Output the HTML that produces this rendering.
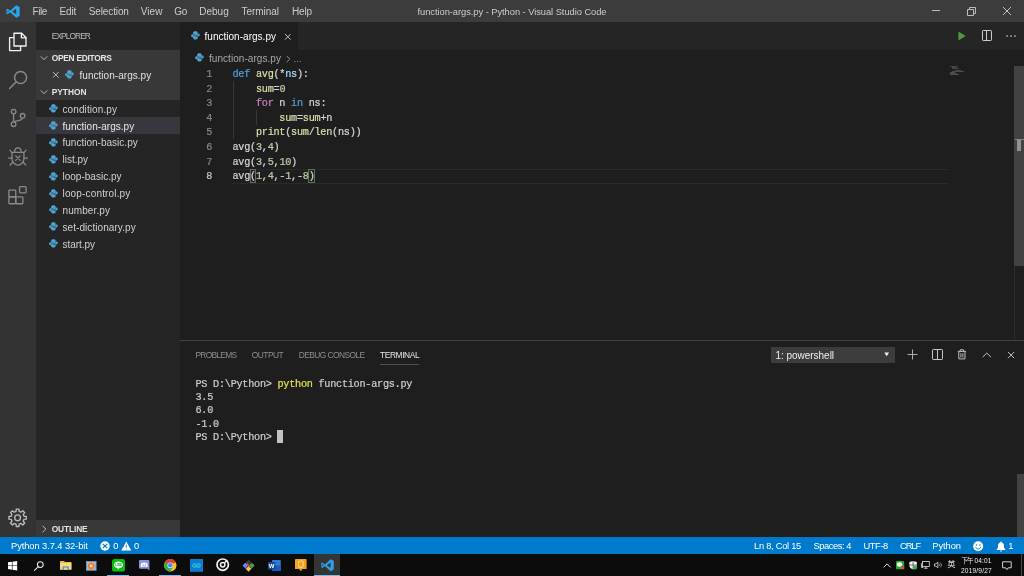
<!DOCTYPE html>
<html lang="en">
<head>
<meta charset="utf-8">
<title>function-args.py - Python - Visual Studio Code</title>
<style>
html,body{margin:0;padding:0;background:#1e1e1e;}
body{width:1024px;height:576px;position:relative;overflow:hidden;font-family:'Liberation Sans', 'Noto Sans CJK TC', sans-serif;}
#app{position:absolute;left:0;top:0;width:1024px;height:576px;overflow:hidden;will-change:transform;}
.t{position:absolute;white-space:pre;font-family:'Liberation Sans', 'Noto Sans CJK TC', sans-serif;}
.mono{position:absolute;white-space:pre;font-family:'Liberation Mono', monospace;font-size:10.2px;line-height:14.58px;height:14.58px;letter-spacing:-0.258px;color:#d4d4d4;-webkit-text-stroke-width:0.22px;}
</style>
</head>
<body>
<div id="app">
<!-- base regions -->
<div style="position:absolute;left:0px;top:0px;width:1024px;height:22px;background:#3c3c3c;"></div>
<div style="position:absolute;left:0px;top:22px;width:36px;height:515px;background:#333333;"></div>
<div style="position:absolute;left:36px;top:22px;width:144px;height:515px;background:#252526;"></div>
<div style="position:absolute;left:180px;top:22px;width:844px;height:28px;background:#252526;"></div>
<div style="position:absolute;left:180px;top:22px;width:117.5px;height:28px;background:#1e1e1e;"></div>
<div style="position:absolute;left:180px;top:340px;width:844px;height:1px;background:#414141;"></div>
<div style="position:absolute;left:0px;top:537px;width:1024px;height:17px;background:#007acc;"></div>
<div style="position:absolute;left:0px;top:554px;width:1024px;height:22px;background:#0c0c0c;"></div>
<!-- title bar -->
<svg style="position:absolute;left:6px;top:5px;overflow:visible;" width="14" height="13" viewBox="0 0 14 13"><path d="M10.2 0.3 L13.6 1.9 V11.1 L10.2 12.7 L4.2 7.3 L1.6 9.3 L0.4 8.7 V4.3 L1.6 3.7 L4.2 5.7 Z M10.2 3.6 L6.3 6.5 L10.2 9.4 Z M1.5 5.2 V7.8 L2.9 6.5 Z" fill="#2aa7f0" fill-rule="evenodd"/></svg>
<div class="t" style="left:32.5px;top:5.3px;line-height:14.0px;font-size:10px;color:#cccccc;letter-spacing:-0.406px;">File</div>
<div class="t" style="left:59.5px;top:5.3px;line-height:14.0px;font-size:10px;color:#cccccc;letter-spacing:-0.121px;">Edit</div>
<div class="t" style="left:88.75px;top:5.3px;line-height:14.0px;font-size:10px;color:#cccccc;letter-spacing:-0.127px;">Selection</div>
<div class="t" style="left:140.75px;top:5.3px;line-height:14.0px;font-size:10px;color:#cccccc;letter-spacing:0.062px;">View</div>
<div class="t" style="left:174.25px;top:5.3px;line-height:14.0px;font-size:10px;color:#cccccc;letter-spacing:-0.297px;">Go</div>
<div class="t" style="left:199.25px;top:5.3px;line-height:14.0px;font-size:10px;color:#cccccc;letter-spacing:0.006px;">Debug</div>
<div class="t" style="left:241.5px;top:5.3px;line-height:14.0px;font-size:10px;color:#cccccc;letter-spacing:-0.037px;">Terminal</div>
<div class="t" style="left:292px;top:5.3px;line-height:14.0px;font-size:10px;color:#cccccc;letter-spacing:-0.145px;">Help</div>
<div class="t" style="left:417.5px;top:5.8px;line-height:13.0px;font-size:9.3px;color:#cccccc;letter-spacing:-0.033px;">function-args.py - Python - Visual Studio Code</div>
<svg style="position:absolute;left:931px;top:5px;overflow:visible;" width="10" height="12" viewBox="0 0 10 12"><path d="M1 5.5 H9" stroke="#bcbcbc" stroke-width="1" fill="none"/></svg>
<svg style="position:absolute;left:966px;top:5px;overflow:visible;" width="11" height="12" viewBox="0 0 11 12"><path d="M1.5 4.5 H7.5 V10.5 H1.5 Z M3.5 4.5 V2.5 H9.5 V8.5 H7.5" stroke="#bcbcbc" stroke-width="1" fill="none"/></svg>
<svg style="position:absolute;left:1002px;top:6px;overflow:visible;" width="10" height="10" viewBox="0 0 10 10"><path d="M1 1 L9 9 M9 1 L1 9" stroke="#c4c4c4" stroke-width="1" fill="none"/></svg>
<!-- activity bar icons -->
<svg style="position:absolute;left:0px;top:22px;overflow:visible;" width="36" height="40" viewBox="0 0 36 40"><g fill="none" stroke="#f2f2f2" stroke-width="1.35" stroke-linejoin="round" stroke-linecap="round"><path d="M14 24 V11.2 H21.6 L26 15.6 V24 Z"/><path d="M21.4 11.4 V15.8 H25.8"/><path d="M13.8 15.6 H9.6 V28.6 H20.6 V24.2"/></g></svg>
<svg style="position:absolute;left:0px;top:62px;overflow:visible;" width="36" height="36" viewBox="0 0 36 36"><g fill="none" stroke="#8a8a8a" stroke-width="1.45" stroke-linecap="round"><circle cx="20.6" cy="15.4" r="6"/><path d="M16.2 19.8 L9.6 26.6"/></g></svg>
<svg style="position:absolute;left:0px;top:100px;overflow:visible;" width="36" height="36" viewBox="0 0 36 36"><g fill="none" stroke="#8a8a8a" stroke-width="1.3"><circle cx="13.6" cy="11.6" r="2.3"/><circle cx="22.6" cy="15.8" r="2.3"/><circle cx="13.6" cy="24.2" r="2.3"/><path d="M13.6 14 V21.8 M22.4 18.2 C22 21 17 20.6 13.8 21.8"/></g></svg>
<svg style="position:absolute;left:0px;top:140px;overflow:visible;" width="36" height="36" viewBox="0 0 36 36"><g fill="none" stroke="#8a8a8a" stroke-width="1.25" stroke-linecap="round" stroke-linejoin="round"><path d="M12 12.3 H23.9 V19 C23.9 22.5 20.5 25 17.95 25 C15.4 25 12 22.5 12 19 Z"/><path d="M14.6 11.9 C14.6 6.4 21.2 6.4 21.2 11.9"/><path d="M12 12.6 L9.8 10.2 M23.9 12.6 L26.1 10.2 M12 18.1 H8.4 M23.9 18.1 H27.4 M12.7 22.2 L10.1 25 M23.2 22.2 L25.8 25"/><path d="M15.7 15.9 L20.2 20.4 M20.2 15.9 L15.7 20.4"/></g></svg>
<svg style="position:absolute;left:0px;top:178px;overflow:visible;" width="36" height="36" viewBox="0 0 36 36"><g fill="none" stroke="#8a8a8a" stroke-width="1.3" stroke-linejoin="round"><rect x="8.9" y="12.05" width="6.85" height="6.85" rx="0.8"/><rect x="8.9" y="18.9" width="6.85" height="6.85" rx="0.8"/><rect x="15.75" y="18.9" width="7.1" height="6.85" rx="0.8"/><rect x="19.55" y="8.65" width="6.55" height="6.2" rx="1"/></g></svg>
<svg style="position:absolute;left:0px;top:500px;overflow:visible;" width="36" height="36" viewBox="0 0 36 36"><g fill="none" stroke="#bcbcbc" stroke-width="1.35" stroke-linejoin="round"><path d="M26.29 16.42 L26.29 19.18 L24.02 19.34 L23.23 21.25 L24.72 22.97 L22.77 24.92 L21.05 23.43 L19.14 24.22 L18.98 26.49 L16.22 26.49 L16.06 24.22 L14.15 23.43 L12.43 24.92 L10.48 22.97 L11.97 21.25 L11.18 19.34 L8.91 19.18 L8.91 16.42 L11.18 16.26 L11.97 14.35 L10.48 12.63 L12.43 10.68 L14.15 12.17 L16.06 11.38 L16.22 9.11 L18.98 9.11 L19.14 11.38 L21.05 12.17 L22.77 10.68 L24.72 12.63 L23.23 14.35 L24.02 16.26 Z"/><circle cx="17.6" cy="17.8" r="2.9"/></g></svg>
<!-- side bar -->
<div class="t" style="left:51.75px;top:31.1px;line-height:11.8px;font-size:8.4px;color:#bbbbbb;letter-spacing:-0.922px;">EXPLORER</div>
<div style="position:absolute;left:36px;top:50px;width:144px;height:50px;background:#383839;"></div>
<svg style="position:absolute;left:40px;top:54.2px;overflow:visible;" width="8" height="8" viewBox="0 0 8 8"><path d="M0.8 2.4 L4 5.6 L7.2 2.4" fill="none" stroke="#c8c8c8" stroke-width="0.9"/></svg>
<div class="t" style="left:51.75px;top:53.3px;line-height:11.8px;font-size:8.4px;color:#e4e4e4;font-weight:700;letter-spacing:-0.283px;">OPEN EDITORS</div>
<svg style="position:absolute;left:52.2px;top:71.4px;overflow:visible;" width="7.6" height="7.6" viewBox="0 0 7.6 7.6"><path d="M1 1 L6.6 6.6 M6.6 1 L1 6.6" fill="none" stroke="#c8c8c8" stroke-width="0.9"/></svg>
<svg style="position:absolute;left:65.2px;top:69.7px;overflow:visible;" width="8.8" height="8.8" viewBox="0 0 10 10"><g fill="#4fa3d1"><path d="M5 0.3 C3.2 0.3 2.4 1 2.4 2 V3.3 H5 V3.8 H1.4 C0.5 3.8 0.1 4.8 0.1 5.5 C0.1 6.4 0.6 7.2 1.4 7.2 H2.4 V6 C2.4 5.2 3 4.8 3.8 4.8 H6.3 C7.1 4.8 7.6 4.2 7.6 3.4 V2 C7.6 1 6.8 0.3 5 0.3 Z"/><path d="M5 0.3 C3.2 0.3 2.4 1 2.4 2 V3.3 H5 V3.8 H1.4 C0.5 3.8 0.1 4.8 0.1 5.5 C0.1 6.4 0.6 7.2 1.4 7.2 H2.4 V6 C2.4 5.2 3 4.8 3.8 4.8 H6.3 C7.1 4.8 7.6 4.2 7.6 3.4 V2 C7.6 1 6.8 0.3 5 0.3 Z" transform="rotate(180 5 5)"/></g></svg>
<div class="t" style="left:79.5px;top:68.8px;line-height:14.0px;font-size:10px;color:#e0e0e0;letter-spacing:0.037px;">function-args.py</div>
<svg style="position:absolute;left:40px;top:88px;overflow:visible;" width="8" height="8" viewBox="0 0 8 8"><path d="M0.8 2.4 L4 5.6 L7.2 2.4" fill="none" stroke="#c8c8c8" stroke-width="0.9"/></svg>
<div class="t" style="left:51.75px;top:87.1px;line-height:11.8px;font-size:8.4px;color:#e4e4e4;font-weight:700;letter-spacing:-0.026px;">PYTHON</div>
<div style="position:absolute;left:36px;top:117.08px;width:144px;height:16.88px;background:#37373d;"></div>
<svg style="position:absolute;left:48.7px;top:104.19px;overflow:visible;" width="8.8" height="8.8" viewBox="0 0 10 10"><g fill="#4fa3d1"><path d="M5 0.3 C3.2 0.3 2.4 1 2.4 2 V3.3 H5 V3.8 H1.4 C0.5 3.8 0.1 4.8 0.1 5.5 C0.1 6.4 0.6 7.2 1.4 7.2 H2.4 V6 C2.4 5.2 3 4.8 3.8 4.8 H6.3 C7.1 4.8 7.6 4.2 7.6 3.4 V2 C7.6 1 6.8 0.3 5 0.3 Z"/><path d="M5 0.3 C3.2 0.3 2.4 1 2.4 2 V3.3 H5 V3.8 H1.4 C0.5 3.8 0.1 4.8 0.1 5.5 C0.1 6.4 0.6 7.2 1.4 7.2 H2.4 V6 C2.4 5.2 3 4.8 3.8 4.8 H6.3 C7.1 4.8 7.6 4.2 7.6 3.4 V2 C7.6 1 6.8 0.3 5 0.3 Z" transform="rotate(180 5 5)"/></g></svg>
<div class="t" style="left:62.5px;top:102.64px;line-height:14.0px;font-size:10px;color:#d0d0d0;letter-spacing:0.094px;">condition.py</div>
<svg style="position:absolute;left:48.7px;top:121.07px;overflow:visible;" width="8.8" height="8.8" viewBox="0 0 10 10"><g fill="#4fa3d1"><path d="M5 0.3 C3.2 0.3 2.4 1 2.4 2 V3.3 H5 V3.8 H1.4 C0.5 3.8 0.1 4.8 0.1 5.5 C0.1 6.4 0.6 7.2 1.4 7.2 H2.4 V6 C2.4 5.2 3 4.8 3.8 4.8 H6.3 C7.1 4.8 7.6 4.2 7.6 3.4 V2 C7.6 1 6.8 0.3 5 0.3 Z"/><path d="M5 0.3 C3.2 0.3 2.4 1 2.4 2 V3.3 H5 V3.8 H1.4 C0.5 3.8 0.1 4.8 0.1 5.5 C0.1 6.4 0.6 7.2 1.4 7.2 H2.4 V6 C2.4 5.2 3 4.8 3.8 4.8 H6.3 C7.1 4.8 7.6 4.2 7.6 3.4 V2 C7.6 1 6.8 0.3 5 0.3 Z" transform="rotate(180 5 5)"/></g></svg>
<div class="t" style="left:62.5px;top:119.52px;line-height:14.0px;font-size:10px;color:#e8e8e8;letter-spacing:0.037px;">function-args.py</div>
<svg style="position:absolute;left:48.7px;top:137.95px;overflow:visible;" width="8.8" height="8.8" viewBox="0 0 10 10"><g fill="#4fa3d1"><path d="M5 0.3 C3.2 0.3 2.4 1 2.4 2 V3.3 H5 V3.8 H1.4 C0.5 3.8 0.1 4.8 0.1 5.5 C0.1 6.4 0.6 7.2 1.4 7.2 H2.4 V6 C2.4 5.2 3 4.8 3.8 4.8 H6.3 C7.1 4.8 7.6 4.2 7.6 3.4 V2 C7.6 1 6.8 0.3 5 0.3 Z"/><path d="M5 0.3 C3.2 0.3 2.4 1 2.4 2 V3.3 H5 V3.8 H1.4 C0.5 3.8 0.1 4.8 0.1 5.5 C0.1 6.4 0.6 7.2 1.4 7.2 H2.4 V6 C2.4 5.2 3 4.8 3.8 4.8 H6.3 C7.1 4.8 7.6 4.2 7.6 3.4 V2 C7.6 1 6.8 0.3 5 0.3 Z" transform="rotate(180 5 5)"/></g></svg>
<div class="t" style="left:62.5px;top:136.4px;line-height:14.0px;font-size:10px;color:#d0d0d0;letter-spacing:0.012px;">function-basic.py</div>
<svg style="position:absolute;left:48.7px;top:154.83px;overflow:visible;" width="8.8" height="8.8" viewBox="0 0 10 10"><g fill="#4fa3d1"><path d="M5 0.3 C3.2 0.3 2.4 1 2.4 2 V3.3 H5 V3.8 H1.4 C0.5 3.8 0.1 4.8 0.1 5.5 C0.1 6.4 0.6 7.2 1.4 7.2 H2.4 V6 C2.4 5.2 3 4.8 3.8 4.8 H6.3 C7.1 4.8 7.6 4.2 7.6 3.4 V2 C7.6 1 6.8 0.3 5 0.3 Z"/><path d="M5 0.3 C3.2 0.3 2.4 1 2.4 2 V3.3 H5 V3.8 H1.4 C0.5 3.8 0.1 4.8 0.1 5.5 C0.1 6.4 0.6 7.2 1.4 7.2 H2.4 V6 C2.4 5.2 3 4.8 3.8 4.8 H6.3 C7.1 4.8 7.6 4.2 7.6 3.4 V2 C7.6 1 6.8 0.3 5 0.3 Z" transform="rotate(180 5 5)"/></g></svg>
<div class="t" style="left:62.5px;top:153.28px;line-height:14.0px;font-size:10px;color:#d0d0d0;letter-spacing:-0.009px;">list.py</div>
<svg style="position:absolute;left:48.7px;top:171.71px;overflow:visible;" width="8.8" height="8.8" viewBox="0 0 10 10"><g fill="#4fa3d1"><path d="M5 0.3 C3.2 0.3 2.4 1 2.4 2 V3.3 H5 V3.8 H1.4 C0.5 3.8 0.1 4.8 0.1 5.5 C0.1 6.4 0.6 7.2 1.4 7.2 H2.4 V6 C2.4 5.2 3 4.8 3.8 4.8 H6.3 C7.1 4.8 7.6 4.2 7.6 3.4 V2 C7.6 1 6.8 0.3 5 0.3 Z"/><path d="M5 0.3 C3.2 0.3 2.4 1 2.4 2 V3.3 H5 V3.8 H1.4 C0.5 3.8 0.1 4.8 0.1 5.5 C0.1 6.4 0.6 7.2 1.4 7.2 H2.4 V6 C2.4 5.2 3 4.8 3.8 4.8 H6.3 C7.1 4.8 7.6 4.2 7.6 3.4 V2 C7.6 1 6.8 0.3 5 0.3 Z" transform="rotate(180 5 5)"/></g></svg>
<div class="t" style="left:62.5px;top:170.16px;line-height:14.0px;font-size:10px;color:#d0d0d0;letter-spacing:0.006px;">loop-basic.py</div>
<svg style="position:absolute;left:48.7px;top:188.59px;overflow:visible;" width="8.8" height="8.8" viewBox="0 0 10 10"><g fill="#4fa3d1"><path d="M5 0.3 C3.2 0.3 2.4 1 2.4 2 V3.3 H5 V3.8 H1.4 C0.5 3.8 0.1 4.8 0.1 5.5 C0.1 6.4 0.6 7.2 1.4 7.2 H2.4 V6 C2.4 5.2 3 4.8 3.8 4.8 H6.3 C7.1 4.8 7.6 4.2 7.6 3.4 V2 C7.6 1 6.8 0.3 5 0.3 Z"/><path d="M5 0.3 C3.2 0.3 2.4 1 2.4 2 V3.3 H5 V3.8 H1.4 C0.5 3.8 0.1 4.8 0.1 5.5 C0.1 6.4 0.6 7.2 1.4 7.2 H2.4 V6 C2.4 5.2 3 4.8 3.8 4.8 H6.3 C7.1 4.8 7.6 4.2 7.6 3.4 V2 C7.6 1 6.8 0.3 5 0.3 Z" transform="rotate(180 5 5)"/></g></svg>
<div class="t" style="left:62.5px;top:187.04px;line-height:14.0px;font-size:10px;color:#d0d0d0;letter-spacing:0.160px;">loop-control.py</div>
<svg style="position:absolute;left:48.7px;top:205.47px;overflow:visible;" width="8.8" height="8.8" viewBox="0 0 10 10"><g fill="#4fa3d1"><path d="M5 0.3 C3.2 0.3 2.4 1 2.4 2 V3.3 H5 V3.8 H1.4 C0.5 3.8 0.1 4.8 0.1 5.5 C0.1 6.4 0.6 7.2 1.4 7.2 H2.4 V6 C2.4 5.2 3 4.8 3.8 4.8 H6.3 C7.1 4.8 7.6 4.2 7.6 3.4 V2 C7.6 1 6.8 0.3 5 0.3 Z"/><path d="M5 0.3 C3.2 0.3 2.4 1 2.4 2 V3.3 H5 V3.8 H1.4 C0.5 3.8 0.1 4.8 0.1 5.5 C0.1 6.4 0.6 7.2 1.4 7.2 H2.4 V6 C2.4 5.2 3 4.8 3.8 4.8 H6.3 C7.1 4.8 7.6 4.2 7.6 3.4 V2 C7.6 1 6.8 0.3 5 0.3 Z" transform="rotate(180 5 5)"/></g></svg>
<div class="t" style="left:62.5px;top:203.92px;line-height:14.0px;font-size:10px;color:#d0d0d0;letter-spacing:0.089px;">number.py</div>
<svg style="position:absolute;left:48.7px;top:222.35px;overflow:visible;" width="8.8" height="8.8" viewBox="0 0 10 10"><g fill="#4fa3d1"><path d="M5 0.3 C3.2 0.3 2.4 1 2.4 2 V3.3 H5 V3.8 H1.4 C0.5 3.8 0.1 4.8 0.1 5.5 C0.1 6.4 0.6 7.2 1.4 7.2 H2.4 V6 C2.4 5.2 3 4.8 3.8 4.8 H6.3 C7.1 4.8 7.6 4.2 7.6 3.4 V2 C7.6 1 6.8 0.3 5 0.3 Z"/><path d="M5 0.3 C3.2 0.3 2.4 1 2.4 2 V3.3 H5 V3.8 H1.4 C0.5 3.8 0.1 4.8 0.1 5.5 C0.1 6.4 0.6 7.2 1.4 7.2 H2.4 V6 C2.4 5.2 3 4.8 3.8 4.8 H6.3 C7.1 4.8 7.6 4.2 7.6 3.4 V2 C7.6 1 6.8 0.3 5 0.3 Z" transform="rotate(180 5 5)"/></g></svg>
<div class="t" style="left:62.5px;top:220.8px;line-height:14.0px;font-size:10px;color:#d0d0d0;letter-spacing:0.069px;">set-dictionary.py</div>
<svg style="position:absolute;left:48.7px;top:239.23px;overflow:visible;" width="8.8" height="8.8" viewBox="0 0 10 10"><g fill="#4fa3d1"><path d="M5 0.3 C3.2 0.3 2.4 1 2.4 2 V3.3 H5 V3.8 H1.4 C0.5 3.8 0.1 4.8 0.1 5.5 C0.1 6.4 0.6 7.2 1.4 7.2 H2.4 V6 C2.4 5.2 3 4.8 3.8 4.8 H6.3 C7.1 4.8 7.6 4.2 7.6 3.4 V2 C7.6 1 6.8 0.3 5 0.3 Z"/><path d="M5 0.3 C3.2 0.3 2.4 1 2.4 2 V3.3 H5 V3.8 H1.4 C0.5 3.8 0.1 4.8 0.1 5.5 C0.1 6.4 0.6 7.2 1.4 7.2 H2.4 V6 C2.4 5.2 3 4.8 3.8 4.8 H6.3 C7.1 4.8 7.6 4.2 7.6 3.4 V2 C7.6 1 6.8 0.3 5 0.3 Z" transform="rotate(180 5 5)"/></g></svg>
<div class="t" style="left:62.5px;top:237.68px;line-height:14.0px;font-size:10px;color:#d0d0d0;letter-spacing:-0.037px;">start.py</div>
<div style="position:absolute;left:36px;top:520.3px;width:144px;height:16.7px;background:#383839;"></div>
<svg style="position:absolute;left:40px;top:524.7px;overflow:visible;" width="8" height="8" viewBox="0 0 8 8"><path d="M2.6 0.8 L5.8 4 L2.6 7.2" fill="none" stroke="#c8c8c8" stroke-width="0.9"/></svg>
<div class="t" style="left:51.75px;top:523.8px;line-height:11.8px;font-size:8.4px;color:#e4e4e4;font-weight:700;letter-spacing:-0.145px;">OUTLINE</div>
<!-- editor tab / breadcrumbs -->
<svg style="position:absolute;left:190.5px;top:31.0px;overflow:visible;" width="8.8" height="8.8" viewBox="0 0 10 10"><g fill="#4fa3d1"><path d="M5 0.3 C3.2 0.3 2.4 1 2.4 2 V3.3 H5 V3.8 H1.4 C0.5 3.8 0.1 4.8 0.1 5.5 C0.1 6.4 0.6 7.2 1.4 7.2 H2.4 V6 C2.4 5.2 3 4.8 3.8 4.8 H6.3 C7.1 4.8 7.6 4.2 7.6 3.4 V2 C7.6 1 6.8 0.3 5 0.3 Z"/><path d="M5 0.3 C3.2 0.3 2.4 1 2.4 2 V3.3 H5 V3.8 H1.4 C0.5 3.8 0.1 4.8 0.1 5.5 C0.1 6.4 0.6 7.2 1.4 7.2 H2.4 V6 C2.4 5.2 3 4.8 3.8 4.8 H6.3 C7.1 4.8 7.6 4.2 7.6 3.4 V2 C7.6 1 6.8 0.3 5 0.3 Z" transform="rotate(180 5 5)"/></g></svg>
<div class="t" style="left:204.5px;top:29.9px;line-height:14.0px;font-size:10px;color:#ffffff;letter-spacing:0.021px;">function-args.py</div>
<svg style="position:absolute;left:283.7px;top:32.7px;overflow:visible;" width="7.6" height="7.6" viewBox="0 0 7.6 7.6"><path d="M1 1 L6.6 6.6 M6.6 1 L1 6.6" fill="none" stroke="#d0d0d0" stroke-width="0.9"/></svg>
<svg style="position:absolute;left:957px;top:31px;overflow:visible;" width="10" height="10" viewBox="0 0 10 10"><path d="M1.4 0.6 L8.6 5 L1.4 9.4 Z" fill="#4e9a3c"/></svg>
<svg style="position:absolute;left:982px;top:30px;overflow:visible;" width="11" height="12" viewBox="0 0 11 12"><rect x="0.5" y="0.5" width="9" height="10" rx="0.7" fill="none" stroke="#cacaca" stroke-width="1"/><path d="M4.5 1 V10" stroke="#cacaca" stroke-width="1"/></svg>
<svg style="position:absolute;left:1005px;top:34px;overflow:visible;" width="12" height="4" viewBox="0 0 12 4"><circle cx="2" cy="2" r="0.85" fill="#c8c8c8"/><circle cx="6" cy="2" r="0.85" fill="#c8c8c8"/><circle cx="10" cy="2" r="0.85" fill="#c8c8c8"/></svg>
<svg style="position:absolute;left:195.0px;top:53.3px;overflow:visible;" width="8.8" height="8.8" viewBox="0 0 10 10"><g fill="#4fa3d1"><path d="M5 0.3 C3.2 0.3 2.4 1 2.4 2 V3.3 H5 V3.8 H1.4 C0.5 3.8 0.1 4.8 0.1 5.5 C0.1 6.4 0.6 7.2 1.4 7.2 H2.4 V6 C2.4 5.2 3 4.8 3.8 4.8 H6.3 C7.1 4.8 7.6 4.2 7.6 3.4 V2 C7.6 1 6.8 0.3 5 0.3 Z"/><path d="M5 0.3 C3.2 0.3 2.4 1 2.4 2 V3.3 H5 V3.8 H1.4 C0.5 3.8 0.1 4.8 0.1 5.5 C0.1 6.4 0.6 7.2 1.4 7.2 H2.4 V6 C2.4 5.2 3 4.8 3.8 4.8 H6.3 C7.1 4.8 7.6 4.2 7.6 3.4 V2 C7.6 1 6.8 0.3 5 0.3 Z" transform="rotate(180 5 5)"/></g></svg>
<div class="t" style="left:209px;top:51.6px;line-height:14.0px;font-size:10px;color:#a8a8a8;letter-spacing:0.053px;">function-args.py</div>
<svg style="position:absolute;left:283.5px;top:54.8px;overflow:visible;" width="8" height="8" viewBox="0 0 8 8"><path d="M2.6 0.8 L5.8 4 L2.6 7.2" fill="none" stroke="#9a9a9a" stroke-width="0.9"/></svg>
<svg style="position:absolute;left:293.5px;top:60px;overflow:visible;" width="8" height="3" viewBox="0 0 8 3"><circle cx="1" cy="1.5" r="0.6" fill="#a0a0a0"/><circle cx="3.6" cy="1.5" r="0.6" fill="#a0a0a0"/><circle cx="6.2" cy="1.5" r="0.6" fill="#a0a0a0"/></svg>
<!-- code -->
<div style="position:absolute;left:232px;top:168.6px;width:717px;height:1px;background:#2a2a2a;"></div>
<div style="position:absolute;left:232px;top:182.6px;width:717px;height:1px;background:#2a2a2a;"></div>
<div style="position:absolute;left:232.5px;top:81px;width:1px;height:58.4px;background:#383838;"></div>
<div style="position:absolute;left:256px;top:110.2px;width:1px;height:14.6px;background:#383838;"></div>
<div style="position:absolute;left:249.79px;top:168.6px;width:6.2px;height:14.6px;background:rgba(0,100,0,0.12);box-sizing:border-box;border:1px solid #686868;"></div>
<div style="position:absolute;left:308.41px;top:168.6px;width:6.2px;height:14.6px;background:rgba(0,100,0,0.12);box-sizing:border-box;border:1px solid #686868;"></div>
<div class="mono" style="left:206.14px;top:68.06px;color:#858585">1</div>
<div class="mono" style="left:232.5px;top:68.06px"><span style="color:#569cd6">def</span><span style="color:#d4d4d4"> </span><span style="color:#dcdcaa">avg</span><span style="color:#d4d4d4">(*</span><span style="color:#9cdcfe">ns</span><span style="color:#d4d4d4">):</span></div>
<div class="mono" style="left:206.14px;top:82.64px;color:#858585">2</div>
<div class="mono" style="left:232.5px;top:82.64px"><span style="color:#d4d4d4">    </span><span style="color:#dcdcaa">sum</span><span style="color:#d4d4d4">=</span><span style="color:#b5cea8">0</span></div>
<div class="mono" style="left:206.14px;top:97.22px;color:#858585">3</div>
<div class="mono" style="left:232.5px;top:97.22px"><span style="color:#d4d4d4">    </span><span style="color:#c586c0">for</span><span style="color:#d4d4d4"> n </span><span style="color:#569cd6">in</span><span style="color:#d4d4d4"> ns:</span></div>
<div class="mono" style="left:206.14px;top:111.8px;color:#858585">4</div>
<div class="mono" style="left:232.5px;top:111.8px"><span style="color:#d4d4d4">        </span><span style="color:#dcdcaa">sum</span><span style="color:#d4d4d4">=</span><span style="color:#dcdcaa">sum</span><span style="color:#d4d4d4">+n</span></div>
<div class="mono" style="left:206.14px;top:126.38px;color:#858585">5</div>
<div class="mono" style="left:232.5px;top:126.38px"><span style="color:#d4d4d4">    </span><span style="color:#dcdcaa">print</span><span style="color:#d4d4d4">(</span><span style="color:#dcdcaa">sum</span><span style="color:#d4d4d4">/</span><span style="color:#dcdcaa">len</span><span style="color:#d4d4d4">(ns))</span></div>
<div class="mono" style="left:206.14px;top:140.96px;color:#858585">6</div>
<div class="mono" style="left:232.5px;top:140.96px"><span style="color:#d4d4d4">avg(</span><span style="color:#b5cea8">3</span><span style="color:#d4d4d4">,</span><span style="color:#b5cea8">4</span><span style="color:#d4d4d4">)</span></div>
<div class="mono" style="left:206.14px;top:155.54px;color:#858585">7</div>
<div class="mono" style="left:232.5px;top:155.54px"><span style="color:#d4d4d4">avg(</span><span style="color:#b5cea8">3</span><span style="color:#d4d4d4">,</span><span style="color:#b5cea8">5</span><span style="color:#d4d4d4">,</span><span style="color:#b5cea8">10</span><span style="color:#d4d4d4">)</span></div>
<div class="mono" style="left:206.14px;top:170.12px;color:#c6c6c6">8</div>
<div class="mono" style="left:232.5px;top:170.12px"><span style="color:#d4d4d4">avg(</span><span style="color:#b5cea8">1</span><span style="color:#d4d4d4">,</span><span style="color:#b5cea8">4</span><span style="color:#d4d4d4">,-</span><span style="color:#b5cea8">1</span><span style="color:#d4d4d4">,-</span><span style="color:#b5cea8">8</span><span style="color:#d4d4d4">)</span></div>
<!-- minimap -->
<div style="position:absolute;left:950.0px;top:66.3px;width:8.06px;height:0.9px;background:#6b7f8f;opacity:.42;"></div>
<div style="position:absolute;left:952.48px;top:67.38px;width:3.1px;height:0.9px;background:#8a8a6f;opacity:.42;"></div>
<div style="position:absolute;left:952.48px;top:68.46px;width:6.82px;height:0.9px;background:#7f7486;opacity:.42;"></div>
<div style="position:absolute;left:954.96px;top:69.54px;width:5.58px;height:0.9px;background:#8a8a6f;opacity:.42;"></div>
<div style="position:absolute;left:952.48px;top:70.62px;width:11.16px;height:0.9px;background:#8a8a6f;opacity:.42;"></div>
<div style="position:absolute;left:950.0px;top:71.7px;width:4.96px;height:0.9px;background:#8a8f84;opacity:.42;"></div>
<div style="position:absolute;left:950.0px;top:72.78px;width:6.82px;height:0.9px;background:#8a8f84;opacity:.42;"></div>
<div style="position:absolute;left:950.0px;top:73.86px;width:8.68px;height:0.9px;background:#8a8f84;opacity:.42;"></div>
<div style="position:absolute;left:1014px;top:66px;width:1px;height:274px;background:#2c2c2c;"></div>
<div style="position:absolute;left:1014.3px;top:66px;width:9.7px;height:200px;background:#424242;"></div>
<div style="position:absolute;left:1014.5px;top:139.2px;width:9.5px;height:1px;background:#858585;"></div>
<div style="position:absolute;left:1017.1px;top:140px;width:4.3px;height:10.6px;background:#929292;"></div>
<!-- panel -->
<div class="t" style="left:195.5px;top:350.1px;line-height:11.8px;font-size:8.4px;color:#8e8e8e;letter-spacing:-0.725px;">PROBLEMS</div>
<div class="t" style="left:251.75px;top:350.1px;line-height:11.8px;font-size:8.4px;color:#8e8e8e;letter-spacing:-0.490px;">OUTPUT</div>
<div class="t" style="left:298.75px;top:350.1px;line-height:11.8px;font-size:8.4px;color:#8e8e8e;letter-spacing:-0.564px;">DEBUG CONSOLE</div>
<div class="t" style="left:380px;top:350.1px;line-height:11.8px;font-size:8.4px;color:#e7e7e7;letter-spacing:-0.389px;">TERMINAL</div>
<div style="position:absolute;left:380px;top:364.3px;width:39.3px;height:1px;background:#505050;"></div>
<div style="position:absolute;left:771px;top:346.5px;width:123.5px;height:16px;background:#3c3c3c;"></div>
<div class="t" style="left:775.5px;top:348.6px;line-height:14.0px;font-size:10px;color:#f0f0f0;letter-spacing:-0.032px;">1: powershell</div>
<svg style="position:absolute;left:884.4px;top:352.4px;overflow:visible;" width="5.4" height="4.4" viewBox="0 0 5.4 4.4"><path d="M0.3 0.4 H5.1 L2.7 4.2 Z" fill="#f0f0f0"/></svg>
<svg style="position:absolute;left:906.5px;top:349px;overflow:visible;" width="11" height="11" viewBox="0 0 11 11"><path d="M5.5 0.5 V10.5 M0.5 5.5 H10.5" stroke="#b4b4b4" stroke-width="0.95" fill="none"/></svg>
<svg style="position:absolute;left:932px;top:349px;overflow:visible;" width="12" height="12" viewBox="0 0 12 12"><rect x="0.5" y="0.5" width="10" height="10" rx="0.7" fill="none" stroke="#c5c5c5" stroke-width="1"/><path d="M5.5 1 V10" stroke="#c5c5c5" stroke-width="1"/></svg>
<svg style="position:absolute;left:956.5px;top:349px;overflow:visible;" width="10" height="11" viewBox="0 0 10 11"><g fill="none" stroke="#c5c5c5" stroke-width="0.95"><path d="M0.8 2.4 H9 M3.2 2.2 V0.8 H6.6 V2.2 M1.8 2.6 V9.9 H8 V2.6 M3.9 4.2 V8.4 M5.9 4.2 V8.4"/></g></svg>
<svg style="position:absolute;left:981.5px;top:351.5px;overflow:visible;" width="10" height="6" viewBox="0 0 10 6"><path d="M0.6 5.2 L4.8 1 L9 5.2" fill="none" stroke="#c5c5c5" stroke-width="1"/></svg>
<svg style="position:absolute;left:1006.9px;top:350.5px;overflow:visible;" width="8.2" height="8.2" viewBox="0 0 8.2 8.2"><path d="M1 1 L7.2 7.2 M7.2 1 L1 7.2" fill="none" stroke="#c5c5c5" stroke-width="1"/></svg>
<!-- terminal -->
<div class="mono" style="left:195.5px;top:377.81px"><span style="color:#cccccc">PS D:\Python&gt; </span><span style="color:#e0e04c">python</span><span style="color:#cccccc"> function-args.py</span></div>
<div class="mono" style="left:195.5px;top:391.06px"><span style="color:#cccccc">3.5</span></div>
<div class="mono" style="left:195.5px;top:404.41px"><span style="color:#cccccc">6.0</span></div>
<div class="mono" style="left:195.5px;top:417.71px"><span style="color:#cccccc">-1.0</span></div>
<div class="mono" style="left:195.5px;top:431.06px"><span style="color:#cccccc">PS D:\Python&gt; </span></div>
<div style="position:absolute;left:277px;top:429.8px;width:6px;height:13px;background:#c2c2c2;"></div>
<div style="position:absolute;left:1017px;top:473.7px;width:7px;height:63.3px;background:#434343;"></div>
<!-- status bar -->
<div class="t" style="left:11px;top:540.2px;line-height:13.0px;font-size:9.3px;color:#fff;letter-spacing:-0.068px;">Python 3.7.4 32-bit</div>
<svg style="position:absolute;left:100.3px;top:541.2px;overflow:visible;" width="10" height="10" viewBox="0 0 10 10"><circle cx="5" cy="5" r="4.7" fill="#fff"/><path d="M2.8 2.8 L7.2 7.2 M7.2 2.8 L2.8 7.2" stroke="#007acc" stroke-width="1.2"/></svg>
<div class="t" style="left:113.2px;top:540.2px;line-height:13.0px;font-size:9.3px;color:#fff;">0</div>
<svg style="position:absolute;left:120.8px;top:541px;overflow:visible;" width="10.6" height="10" viewBox="0 0 10.6 10"><path d="M5.3 0.4 L10.3 9.6 H0.3 Z" fill="#fff"/><path d="M5.3 3.6 V6.6 M5.3 7.6 V8.6" stroke="#007acc" stroke-width="0.8"/></svg>
<div class="t" style="left:134px;top:540.2px;line-height:13.0px;font-size:9.3px;color:#fff;">0</div>
<div class="t" style="left:754px;top:540.2px;line-height:13.0px;font-size:9.3px;color:#fff;letter-spacing:-0.262px;">Ln 8, Col 15</div>
<div class="t" style="left:813.5px;top:540.2px;line-height:13.0px;font-size:9.3px;color:#fff;letter-spacing:-0.429px;">Spaces: 4</div>
<div class="t" style="left:863.5px;top:540.2px;line-height:13.0px;font-size:9.3px;color:#fff;letter-spacing:-0.389px;">UTF-8</div>
<div class="t" style="left:900px;top:540.2px;line-height:13.0px;font-size:9.3px;color:#fff;letter-spacing:-1.070px;">CRLF</div>
<div class="t" style="left:932.3px;top:540.2px;line-height:13.0px;font-size:9.3px;color:#fff;letter-spacing:-0.059px;">Python</div>
<svg style="position:absolute;left:973.4px;top:540.8px;overflow:visible;" width="10.4" height="10.4" viewBox="0 0 10.4 10.4"><circle cx="5.2" cy="5.2" r="5" fill="#fff"/><circle cx="3.5" cy="4" r="0.8" fill="#007acc"/><circle cx="6.9" cy="4" r="0.8" fill="#007acc"/><path d="M2.6 6 C3.4 8.6 7 8.6 7.8 6" stroke="#007acc" stroke-width="0.9" fill="none"/></svg>
<svg style="position:absolute;left:995.6px;top:540.6px;overflow:visible;" width="10" height="11" viewBox="0 0 10 11"><path d="M5 0.6 C5.6 0.6 5.8 1 5.8 1.5 C7.6 2 8 3.6 8 5.2 C8 7 8.6 7.6 9.4 8.4 V9 H0.6 V8.4 C1.4 7.6 2 7 2 5.2 C2 3.6 2.4 2 4.2 1.5 C4.2 1 4.4 0.6 5 0.6 Z M3.9 9.5 H6.1 C6.1 10.2 5.6 10.6 5 10.6 C4.4 10.6 3.9 10.2 3.9 9.5 Z" fill="#fff"/></svg>
<div class="t" style="left:1008.2px;top:540.2px;line-height:13.0px;font-size:9.3px;color:#fff;">1</div>
<!-- taskbar -->
<svg style="position:absolute;left:8px;top:560.6px;overflow:visible;" width="9.2" height="9.4" viewBox="0 0 9.2 9.4"><path d="M0 1.3 L3.9 0.75 V4.4 H0 Z M4.5 0.65 L9.2 0 V4.4 H4.5 Z M0 5 H3.9 V8.65 L0 8.1 Z M4.5 5 H9.2 V9.4 L4.5 8.75 Z" fill="#ffffff"/></svg>
<svg style="position:absolute;left:33px;top:559.5px;overflow:visible;" width="12" height="12" viewBox="0 0 12 12"><g fill="none" stroke="#e8e8e8" stroke-width="1.05" stroke-linecap="round"><circle cx="7.3" cy="4.6" r="2.9"/><path d="M5.2 6.8 L1.4 10.4"/></g></svg>
<svg style="position:absolute;left:60px;top:560.4px;overflow:visible;" width="11.4" height="9.8" viewBox="0 0 11.4 9.8"><path d="M0 1 H4 L5 2 H11.4 V9.6 H0 Z" fill="#e8b94a"/><path d="M0 3 H11.4 V9.6 H0 Z" fill="#f8d978"/><path d="M2.6 6.4 H8.8 V9.6 H2.6 Z" fill="#3c9de0"/><path d="M4 7.6 H7.4 V9.6 H4 Z" fill="#f8d978"/></svg>
<svg style="position:absolute;left:86px;top:560.6px;overflow:visible;" width="10.6" height="9.8" viewBox="0 0 10.6 9.8"><rect x="0" y="0" width="10.6" height="9.8" fill="#6d94bd"/><rect x="1" y="1" width="8.6" height="7.8" fill="#a9bfd8"/><circle cx="5.2" cy="4.9" r="3.5" fill="#f08030"/><path d="M4.2 3.2 L7 4.9 L4.2 6.6 Z" fill="#fff"/></svg>
<svg style="position:absolute;left:111.5px;top:559px;overflow:visible;" width="13" height="12.6" viewBox="0 0 13 12.6"><rect x="0" y="0" width="13" height="12.6" rx="2.6" fill="#08bf0e"/><path d="M6.5 2.4 C3.8 2.4 2 4 2 5.8 C2 7.5 3.4 8.8 5.6 9.1 L5.7 10.6 L7.6 9.1 C9.6 8.8 11 7.5 11 5.8 C11 4 9.2 2.4 6.5 2.4 Z" fill="#fff"/><text x="6.5" y="6.9" font-family="Liberation Sans, sans-serif" font-size="3.1" font-weight="700" fill="#08bf0e" text-anchor="middle">LINE</text></svg>
<div style="position:absolute;left:107px;top:574.6px;width:21.8px;height:1.4px;background:#76b9ed;"></div>
<svg style="position:absolute;left:138.7px;top:560px;overflow:visible;" width="10.4" height="10.4" viewBox="0 0 10.4 10.4"><path d="M1.2 0 H9.2 C9.9 0 10.4 0.5 10.4 1.2 V10.4 L8.6 8.8 H1.2 C0.5 8.8 0 8.3 0 7.6 V1.2 C0 0.5 0.5 0 1.2 0 Z" fill="#8a94da"/><path d="M2.4 3 C4 2.2 6.4 2.2 8 3 C8.6 4.2 8.8 5.4 8.7 6.4 C7.8 7 7 7 7 7 L6.6 6.4 H3.8 L3.4 7 C3.4 7 2.6 7 1.7 6.4 C1.6 5.4 1.8 4.2 2.4 3 Z" fill="#fff"/><circle cx="4" cy="5" r="0.7" fill="#8a94da"/><circle cx="6.4" cy="5" r="0.7" fill="#8a94da"/></svg>
<svg style="position:absolute;left:163.7px;top:558.8px;overflow:visible;" width="12.6" height="12.6" viewBox="0 0 12.6 12.6"><circle cx="6.3" cy="6.3" r="6.2" fill="#fbc116"/><path d="M6.3 6.3 L0.93 3.2 A6.2 6.2 0 0 1 11.67 3.2 Z" fill="#e33e2b"/><path d="M6.3 6.3 L0.93 3.2 A6.2 6.2 0 0 0 6.3 12.5 L9 7.9 Z" fill="#2da94f"/><path d="M6.3 3.4 H11.75" stroke="#e33e2b" stroke-width="0.1"/><circle cx="6.3" cy="6.3" r="2.9" fill="#f1f1f1"/><circle cx="6.3" cy="6.3" r="2.3" fill="#4a8af4"/></svg>
<div style="position:absolute;left:159.4px;top:574.6px;width:21.2px;height:1.4px;background:#76b9ed;"></div>
<svg style="position:absolute;left:190px;top:559px;overflow:visible;" width="13" height="12.8" viewBox="0 0 13 12.8"><rect width="13" height="12.8" fill="#0c7bd4"/><g fill="none" stroke="#3cc9c4" stroke-width="1.1"><circle cx="4.5" cy="6.4" r="1.7"/><circle cx="8.5" cy="6.4" r="1.7"/></g></svg>
<svg style="position:absolute;left:215.8px;top:558.4px;overflow:visible;" width="13.4" height="13.4" viewBox="0 0 13.4 13.4"><g fill="none" stroke="#f4f4f4"><circle cx="6.7" cy="6.7" r="5.7" stroke-width="1.7"/><circle cx="6.7" cy="6.7" r="2.2" stroke-width="1.5"/><path d="M8.6 4.8 L11 2.4" stroke-width="1.4"/></g></svg>
<svg style="position:absolute;left:242px;top:558.6px;overflow:visible;" width="13.2" height="13.2" viewBox="0 0 13.2 13.2"><g transform="rotate(45 6.6 6.6)"><rect x="2.3" y="2.3" width="4.1" height="4.1" fill="#3b3b3b"/><rect x="6.8" y="2.3" width="4.1" height="4.1" fill="#3aa655"/><rect x="2.3" y="6.8" width="4.1" height="4.1" fill="#5b8def"/><rect x="6.8" y="6.8" width="4.1" height="4.1" fill="#f2c744"/></g><path d="M4.6 4.2 L8.4 8" stroke="#d64541" stroke-width="1.4"/></svg>
<svg style="position:absolute;left:268.2px;top:559.6px;overflow:visible;" width="12.8" height="11" viewBox="0 0 12.8 11"><rect x="4" y="0" width="8.8" height="11" rx="0.8" fill="#2b7cd3"/><rect x="4" y="5.5" width="8.8" height="5.5" fill="#185abd"/><rect x="0" y="2" width="7.4" height="7.4" rx="0.7" fill="#17479e"/><text x="3.7" y="8" font-family="Liberation Sans, sans-serif" font-size="6" font-weight="700" fill="#fff" text-anchor="middle">W</text></svg>
<svg style="position:absolute;left:295.2px;top:559px;overflow:visible;" width="11.6" height="12.4" viewBox="0 0 11.6 12.4"><path d="M0.8 0 H10.8 C11.3 0 11.6 0.3 11.6 0.8 V10 H7.4 L5.8 12.2 L4.2 10 H0 V0.8 C0 0.3 0.3 0 0.8 0 Z" fill="#f2a21e"/><rect x="3.4" y="2" width="4.8" height="6.4" rx="1.6" fill="none" stroke="#f9d48c" stroke-width="1.1"/></svg>
<div style="position:absolute;left:314px;top:554px;width:26px;height:22px;background:#343434;"></div>
<div style="position:absolute;left:314px;top:574.6px;width:26px;height:1.4px;background:#76b9ed;"></div>
<svg style="position:absolute;left:320.6px;top:558.8px;overflow:visible;" width="13" height="12.4" viewBox="0 0 13 12.4"><path d="M9.5 0.2 L12.8 1.8 V10.6 L9.5 12.2 L3.9 7 L1.5 8.9 L0.3 8.3 V4.1 L1.5 3.5 L3.9 5.4 Z M9.5 3.4 L5.9 6.2 L9.5 9 Z M1.4 5 V7.4 L2.7 6.2 Z" fill="#2b9fe8" fill-rule="evenodd"/></svg>
<svg style="position:absolute;left:883.2px;top:562.6px;overflow:visible;" width="8.2" height="5" viewBox="0 0 8.2 5"><path d="M0.6 4.4 L4.1 0.9 L7.6 4.4" fill="none" stroke="#e6e6e6" stroke-width="0.95"/></svg>
<svg style="position:absolute;left:896.4px;top:561px;overflow:visible;" width="8.2" height="8.2" viewBox="0 0 9 9"><rect width="9" height="9" rx="1" fill="#22b02a"/><ellipse cx="3.9" cy="3.9" rx="2.9" ry="2.4" fill="#fff"/><rect x="5.6" y="5.6" width="3.4" height="3.4" fill="#e04a3a"/></svg>
<svg style="position:absolute;left:909.4px;top:561px;overflow:visible;" width="8.2" height="8.6" viewBox="0 0 9 9.4"><path d="M4.5 0 L8.6 1.2 V5 C8.6 7.2 6.8 8.6 4.5 9.4 C2.2 8.6 0.4 7.2 0.4 5 V1.2 Z" fill="#f2f2f2"/><path d="M4.5 0 V9.4 M0.4 4.4 H8.6" stroke="#0c0c0c" stroke-width="0.6"/><circle cx="6.8" cy="7" r="2.2" fill="#2bb24c"/></svg>
<svg style="position:absolute;left:921.4px;top:561.2px;overflow:visible;" width="8.8" height="8" viewBox="0 0 10 9"><g fill="none" stroke="#e6e6e6" stroke-width="0.9"><rect x="1.6" y="0.6" width="7.8" height="5.6"/><path d="M3.6 8.2 H7.6 M5.6 6.2 V8.2 M0.5 2.4 V7.4 H2.6"/></g></svg>
<svg style="position:absolute;left:933.8px;top:561.2px;overflow:visible;" width="8.8" height="8" viewBox="0 0 10 9"><path d="M0.5 3.2 H2.2 L4.4 1.2 V7.8 L2.2 5.8 H0.5 Z" fill="none" stroke="#e6e6e6" stroke-width="0.85" stroke-linejoin="round"/><path d="M5.8 3 C6.6 3.8 6.6 5.2 5.8 6 M7.2 1.8 C8.8 3.4 8.8 5.6 7.2 7.2" fill="none" stroke="#bdbdbd" stroke-width="0.8"/></svg>
<div class="t" style="left:947.6px;top:560.15px;line-height:10.9px;font-size:7.8px;color:#f0f0f0;">英</div>
<div class="t" style="left:961.4px;top:555.8px;line-height:9.0px;font-size:6.4px;color:#f0f0f0;letter-spacing:-0.691px;">下午</div>
<div class="t" style="left:974.6px;top:555.9px;line-height:9.2px;font-size:6.6px;color:#f0f0f0;letter-spacing:0.097px;">04:01</div>
<div class="t" style="left:961px;top:565.6px;line-height:9.2px;font-size:6.6px;color:#f0f0f0;letter-spacing:0.162px;">2019/9/27</div>
<svg style="position:absolute;left:1001.6px;top:560.6px;overflow:visible;" width="10" height="10" viewBox="0 0 10 10"><path d="M0.6 0.8 H9.2 V6.8 H6.2 L4.9 8.6 L3.6 6.8 H0.6 Z" fill="none" stroke="#e6e6e6" stroke-width="0.9" stroke-linejoin="round"/></svg>
<div style="position:absolute;left:1020.6px;top:554px;width:0.8px;height:22px;background:#4a4a4a;"></div>
</div>
</body>
</html>
